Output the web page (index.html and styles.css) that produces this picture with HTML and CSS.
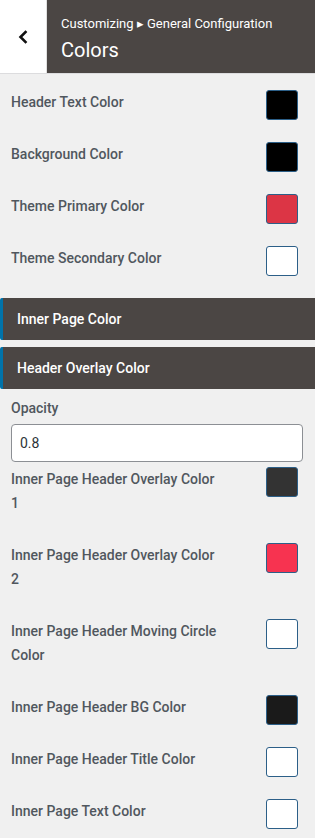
FILE: index.html
```html
<!DOCTYPE html>
<html>
<head>
<meta charset="utf-8">
<link rel="stylesheet" href="styles.css">
</head>
<body>
<div class="header">
  <div class="back">
    <svg width="12" height="14" viewBox="0 0 12 14"><path d="M8.5 2 L3.5 7 L8.5 12" fill="none" stroke="#111" stroke-width="2.6" stroke-linecap="square"/></svg>
  </div>
  <div class="title">
    <div class="crumb">Customizing ▸ General Configuration</div>
    <div class="name">Colors</div>
  </div>
</div>
<div class="content">
  <div class="row"><div class="label">Header Text Color</div><div class="swatch" style="background:#000"></div></div>
  <div class="row"><div class="label">Background Color</div><div class="swatch" style="background:#000"></div></div>
  <div class="row"><div class="label">Theme Primary Color</div><div class="swatch" style="background:#dc3545"></div></div>
  <div class="row"><div class="label">Theme Secondary Color</div><div class="swatch" style="background:#fff"></div></div>
</div>
<div class="section">Inner Page Color</div>
<div class="section">Header Overlay Color</div>
<div class="content2">
  <div class="opacity-label">Opacity</div>
  <div class="input">0.8</div>
  <div class="row"><div class="label">Inner Page Header Overlay Color 1</div><div class="swatch" style="background:#333333"></div></div>
  <div class="row"><div class="label">Inner Page Header Overlay Color 2</div><div class="swatch" style="background:#f73350"></div></div>
  <div class="row"><div class="label">Inner Page Header Moving Circle Color</div><div class="swatch" style="background:#fff"></div></div>
  <div class="row"><div class="label">Inner Page Header BG Color</div><div class="swatch" style="background:#1a1a1a"></div></div>
  <div class="row"><div class="label">Inner Page Header Title Color</div><div class="swatch" style="background:#fff"></div></div>
  <div class="row"><div class="label">Inner Page Text Color</div><div class="swatch" style="background:#fff"></div></div>
</div>
</body>
</html>
```
FILE: styles.css
```css
html, body {
  margin: 0;
  padding: 0;
}
body {
  background: #f0f0f0;
  font-family: Roboto, "Liberation Sans", sans-serif;
  width: 315px;
  overflow: hidden;
}
.header {
  display: flex;
  height: 73px;
  border-bottom: 1px solid #dcdcde;
}
.back {
  width: 46px;
  background: #fff;
  border-right: 1px solid #e0e0e0;
  display: flex;
  align-items: center;
  justify-content: center;
}
.title {
  flex: 1;
  background: #4b4644;
  color: #fff;
  padding-left: 14px;
  padding-top: 15px;
  box-sizing: border-box;
}
.crumb {
  font-size: 13px;
  line-height: 18px;
}
.name {
  font-size: 20px;
  line-height: 26px;
  margin-top: 4px;
}
.content {
  padding: 16px 17px 0 11px;
}
.content2 {
  padding: 7px 12px 0 11px;
}
.content2 .row {
  margin-right: 5px;
}
.row {
  display: flex;
  justify-content: space-between;
  align-items: flex-start;
}
.label {
  width: 208px;
  font-size: 14px;
  font-weight: 500;
  line-height: 24px;
  color: #50575e;
  padding-bottom: 28px;
}
.swatch {
  width: 30px;
  height: 28px;
  border: 1px solid #2c5f88;
  border-radius: 3px;
}
.section {
  height: 42px;
  background: #4b4644;
  border-left: 3px solid #0073aa;
  border-radius: 2px 0 0 2px;
  color: #fff;
  font-size: 14px;
  font-weight: 500;
  line-height: 42px;
  padding-left: 14px;
  margin-bottom: 7px;
}
.section + .content2 {
  margin-top: -7px;
}
.opacity-label {
  font-size: 14px;
  font-weight: 500;
  line-height: 24px;
  color: #50575e;
}
.input {
  margin-top: 4px;
  height: 36px;
  border: 1px solid #8c8f94;
  border-radius: 4px;
  background: #fff;
  font-size: 14px;
  line-height: 36px;
  padding-left: 8px;
  color: #2c3338;
  margin-bottom: 5px;
}
```
